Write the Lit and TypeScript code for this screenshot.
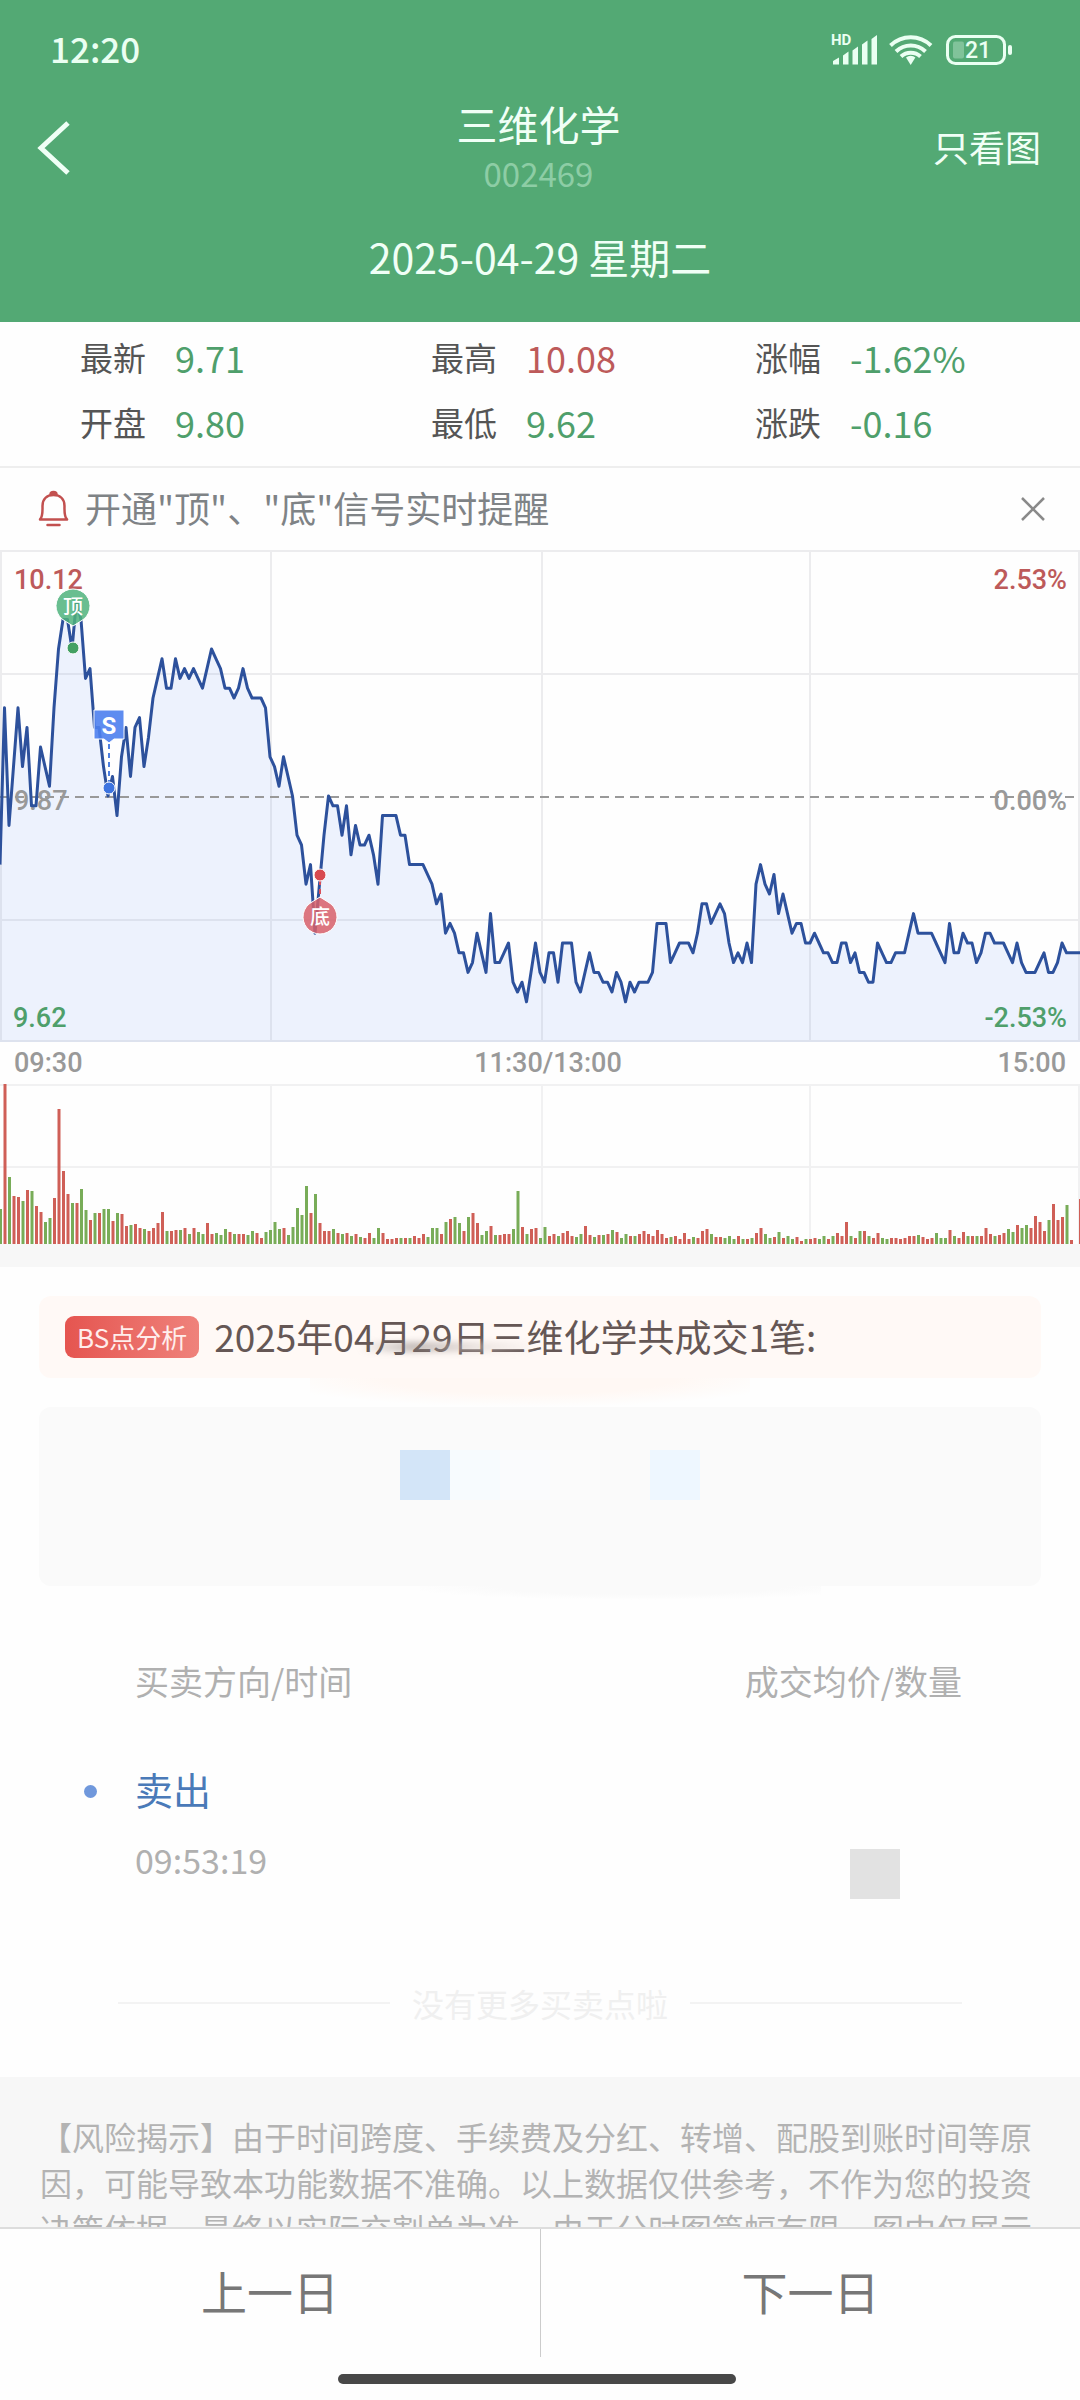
import { LitElement, html, svg, css } from "lit";
import { customElement } from "lit/decorators.js";

const PREV_CLOSE = 9.87;

/* Minute prices, in cents above or below the previous close. */
const PRICE_STEPS = [
  -7, 9, -3, 3, 9, 3, 7, -1, -1, 5, 3, 1, 9, 15, 18, 18, 15, 20, 18, 12,
  13, 7, 7, 3, 0, 2, -2, 4, 7, 2, 7, 8, 3, 6, 10, 12, 14, 11, 11, 14,
  12, 13, 12, 13, 12, 11, 13, 15, 14, 13, 11, 11, 10, 11, 13, 11, 10, 10, 10, 9,
  4, 3, 1, 4, 2, 0, -4, -5, -9, -7, -14, -9, -4, 0, -1, -1, -4, -1, -6, -3,
  -5, -5, -4, -6, -9, -2, -2, -2, -2, -4, -4, -7, -7, -7, -7, -8, -9, -11, -10, -14,
  -13, -14, -16, -16, -18, -17, -14, -16, -18, -12, -17, -17, -16, -15, -19, -20, -19, -21, -18, -15,
  -18, -19, -16, -16, -19, -15, -15, -15, -19, -20, -18, -16, -18, -18, -19, -19, -20, -18, -19, -21,
  -19, -20, -19, -19, -19, -18, -13, -13, -13, -17, -16, -15, -15, -15, -16, -14, -11, -11, -13, -12,
  -11, -12, -15, -17, -16, -17, -15, -17, -9, -7, -9, -10, -8, -12, -10, -12, -14, -13, -13, -15,
  -15, -14, -15, -16, -16, -17, -17, -15, -15, -17, -16, -18, -18, -19, -19, -15, -16, -17, -17, -16,
  -16, -16, -14, -12, -14, -14, -14, -14, -15, -16, -17, -13, -16, -16, -14, -15, -15, -17, -16, -14,
  -14, -15, -15, -15, -16, -17, -15, -17, -18, -18, -18, -17, -16, -18, -18, -17, -15, -16, -16, -16, -16,
];

/* Minute volumes; the letter tells a rising (r) from a falling (g) minute. */
const VOLUMES = (
  "g35 r160 g67 r48 r47 g43 r54 g53 r38 r32 g22 g26 r46 r135 r73 r50 g41 r41 g55 g34 " +
  "r24 g31 r31 g35 g35 r23 g31 r30 r18 g19 r20 r16 g15 r13 r16 r21 r32 g13 r13 r14 " +
  "g14 r16 g10 r16 g12 g10 r21 r10 g11 g9 g15 r12 g10 r10 r10 g9 g13 r11 r6 g12 " +
  "g14 g22 g15 r16 g9 g17 g36 g29 g58 r31 g50 r21 r13 r13 g15 r11 g10 r11 g8 r10 " +
  "g7 r6 r11 g6 g16 r11 r5 r5 r6 g6 r6 g6 r8 r6 r10 g7 g16 g16 r10 g22 " +
  "r25 g27 g21 r13 g27 r31 r21 g9 g13 r18 g9 r9 r10 r10 g15 g53 r17 g10 r15 r16 " +
  "g6 g17 r8 r10 g8 r11 r13 r8 g7 g10 r18 r9 g7 r9 g9 r10 g14 r12 g6 g10 " +
  "r8 g8 r10 r13 r10 r8 r14 r10 r6 g7 r8 r5 r11 r5 g7 r6 r13 r15 g10 r7 " +
  "r7 g6 g8 g5 r8 g5 r5 g6 r11 r16 g10 g6 r7 g12 r6 g8 g5 r7 r3 g5 " +
  "r5 r6 g5 g8 r5 g8 r11 r8 r22 g8 r6 g13 r13 g8 r6 r11 g6 g5 r6 r6 " +
  "r5 r6 r8 r8 g9 r7 r5 r6 g11 g6 g6 r14 g8 r6 r12 g8 r8 g8 r8 r16 " +
  "r10 g8 r9 r11 g15 g12 r19 g16 g19 r16 r28 r22 r13 g24 r40 r24 r27 g39 r4 g0 r45"
)
  .split(" ")
  .map((v) => ({ up: v[0] === "r", size: Number(v.slice(1)) }));

const MINUTE = 4.5;

@customElement("status-bar")
class StatusBar extends LitElement {
  static styles = css`
    :host {
      display: flex;
      align-items: center;
      justify-content: space-between;
      height: 98px;
      padding: 0 65px 0 50px;
      color: #eafff2;
    }
    .clock {
      padding-bottom: 2px;
      font-size: 35px;
      font-weight: 500;
      line-height: 48px;
    }
    .icons {
      display: block;
      width: 184px;
      height: 32px;
      margin-top: 2px;
      overflow: visible;
    }
    .hd {
      font: 700 15px "Roboto", sans-serif;
    }
    .level {
      font: 500 23px "Roboto", sans-serif;
    }
  `;

  render() {
    return html`
      <span class="clock">12:20</span>
      <svg class="icons" viewBox="0 0 184 32" fill="currentColor" aria-hidden="true">
        <text class="hd" x="0" y="11">HD</text>
        <path d="M2 30.500V27L8 23.500V30.500zM12 30.500V21.500L17.500 17.500V30.500zM21.500 30.500V16.500L27 12.500V30.500zM31 30.500V10.500L36.500 6.500V30.500zM40.500 30.500V5L46 1V30.500z" />
        <path d="M75 23.500a7 7 0 0 1 9.400 0L79.700 31z" />
        <g fill="none" stroke="currentColor" stroke-width="4">
          <path d="M59.500 11.500C71 0.500 88.500 0.500 100 11.500" />
          <path d="M65 17.500C73.500 9.500 86 9.500 94.500 17.500" />
          <path d="M70 22.500C75.500 17.500 84 17.500 89.500 22.500" />
        </g>
        <rect x="116.500" y="2.500" width="57" height="27" rx="8" fill="none" stroke="currentColor" stroke-width="3" />
        <rect x="122" y="7.500" width="11" height="17" rx="2" opacity="0.300" />
        <rect x="177" y="11" width="4" height="10" rx="2" />
        <text class="level" x="134" y="24">21</text>
      </svg>
    `;
  }
}

@customElement("price-chart")
class PriceChart extends LitElement {
  static styles = css`
    :host {
      display: block;
    }
    .plot {
      display: block;
      width: 100%;
      height: auto;
    }
    .grid {
      stroke: #ececee;
      stroke-width: 2;
    }
    .base {
      stroke: #999;
      stroke-width: 2;
      stroke-dasharray: 9 6;
    }
    .area {
      fill: #5c8df6;
      fill-opacity: 0.1;
    }
    .line {
      fill: none;
      stroke: #2d519c;
      stroke-width: 3;
      stroke-linejoin: round;
    }
    .label {
      font: 500 27px "Roboto", sans-serif;
    }
    .end {
      text-anchor: end;
    }
    .up {
      fill: #bd5a5a;
    }
    .down {
      fill: #4f9f6b;
    }
    .flat {
      fill: #999;
    }
    .mark {
      fill: #fff;
      font: 500 20px "Noto Sans CJK SC", sans-serif;
      text-anchor: middle;
    }
    .sell {
      font: 700 24px "Roboto", sans-serif;
    }
    .axis {
      display: grid;
      grid-template-columns: 1fr auto 1fr;
      padding: 0 14px;
      color: #999;
      font: 500 27px/42px "Roboto", sans-serif;
    }
    .noon {
      padding-left: 16px;
    }
    .close {
      text-align: right;
    }
  `;

  render() {
    const points = PRICE_STEPS.map((s, i) => `${i * MINUTE},${(246 - s * 9.8).toFixed(1)}`).join(" ");
    return html`
      <svg class="plot" viewBox="0 0 1080 492" role="img" aria-label="分时图">
        <path class="grid" d="M0 1H1080M0 124H1080M0 370H1080M0 491H1080M1 0V492M271 0V492M542 0V492M810 0V492M1079 0V492" />
        <polygon class="area" points="0,492 ${points} 1080,492" />
        <path class="base" d="M0 247H1080" />
        <text class="label flat" x="14" y="260">${PREV_CLOSE}</text>
        <polyline class="line" points=${points} />
        <text class="label up" x="14" y="39">10.12</text>
        <text class="label down" x="13" y="477">9.62</text>
        <text class="label up end" x="1067" y="39">2.53%</text>
        <text class="label flat end" x="1067" y="260">0.00%</text>
        <text class="label down end" x="1067" y="477">-2.53%</text>

        <circle cx="73" cy="98" r="6" fill="#43a063" stroke="#fff" />
        <path d="M73 76l-8-5a17 17 0 1 1 16 0z" fill="#4fb37c" fill-opacity="0.850" stroke="#fff" />
        <text class="mark" x="73" y="64">顶</text>

        <path d="M109 194V238" stroke="#4d7fe0" stroke-width="2" stroke-dasharray="5 4" />
        <circle cx="109" cy="238" r="6" fill="#3d74e0" stroke="#fff" />
        <path d="M94 160h30v29h-10l-5 4l-5-4h-10z" fill="#4d80ee" fill-opacity="0.900" stroke="#fff" />
        <text class="mark sell" x="109" y="184">S</text>

        <path d="M320 330V348" stroke="#d8505a" stroke-width="2" stroke-dasharray="5 4" />
        <circle cx="320" cy="325" r="6" fill="#d84a50" stroke="#fff" />
        <path d="M320 347l8 5a17 17 0 1 1-16 0z" fill="#d8606a" fill-opacity="0.850" stroke="#fff" />
        <text class="mark" x="320" y="374">底</text>
      </svg>
      <div class="axis">
        <span>09:30</span>
        <span class="noon">11:30/13:00</span>
        <span class="close">15:00</span>
      </div>
    `;
  }
}

@customElement("volume-chart")
class VolumeChart extends LitElement {
  static styles = css`
    :host {
      display: block;
    }
    .plot {
      display: block;
      width: 100%;
      height: auto;
    }
    .grid {
      stroke: #f1f1f2;
      stroke-width: 2;
    }
    .rise {
      fill: #cf5f57;
    }
    .fall {
      fill: #78ac58;
    }
  `;

  render() {
    return html`
      <svg class="plot" viewBox="0 0 1080 160" role="img" aria-label="成交量">
        <path class="grid" d="M0 1H1080M0 83H1080M271 0V160M542 0V160M810 0V160M1079 0V160" />
        ${VOLUMES.map(
          (v, i) => svg`<rect class=${v.up ? "rise" : "fall"} x=${i * MINUTE - 1} y=${160 - v.size}
            width="3" height=${v.size} />`
        )}
      </svg>
    `;
  }
}

@customElement("app-root")
class AppRoot extends LitElement {
  static styles = css`
    :host {
      display: flex;
      flex-direction: column;
      height: 100vh;
      background: #fefefe;
      color: #555;
      font-family: "Noto Sans CJK SC", sans-serif;
    }
    button {
      padding: 0;
      border: 0;
      background: none;
      color: inherit;
      font: inherit;
      cursor: pointer;
    }
    .scroll {
      flex: 1;
      min-height: 0;
      overflow-y: auto;
      scrollbar-width: none;
    }
    .header {
      padding-bottom: 36px;
      background: #53a974;
      color: #f0fff6;
      text-align: center;
    }
    .bar {
      display: grid;
      grid-template-columns: 1fr auto 1fr;
      align-items: center;
      padding: 0 39px 0 36px;
    }
    .back {
      justify-self: start;
      display: flex;
    }
    .name {
      margin: 0;
      font-size: 41px;
      font-weight: 400;
      line-height: 50px;
    }
    .code {
      color: #8dcda5;
      font-size: 33px;
      line-height: 50px;
    }
    .only {
      justify-self: end;
      padding-bottom: 4px;
      font-size: 36px;
      line-height: 48px;
    }
    .date {
      margin-top: 28px;
      font-size: 41px;
      line-height: 60px;
    }
    .stats {
      display: grid;
      grid-template-columns: 351px 324px 1fr;
      margin: 0;
      padding: 3px 0 11px 80px;
      border-bottom: 2px solid #eee;
    }
    .stat {
      display: flex;
      align-items: center;
      gap: 29px;
      line-height: 65px;
    }
    .stat dt {
      font-size: 33px;
    }
    .stat dd {
      margin: 0;
      font-size: 36px;
    }
    .down {
      color: #4f9f6b;
    }
    .up {
      color: #bd5a5a;
    }
    .notice {
      display: flex;
      align-items: center;
      height: 82px;
      padding: 0 34px 0 38px;
      color: #7f8386;
      font-size: 36px;
    }
    .bell {
      margin-right: 16px;
    }
    .tip {
      padding-bottom: 4px;
    }
    .dismiss {
      display: flex;
      margin-left: auto;
      color: #8a8a8a;
    }
    .gap {
      height: 23px;
      background: #f7f7f7;
    }
    .analysis {
      display: flex;
      flex-direction: column;
      gap: 29px;
      padding: 29px 39px 0;
    }
    .summary {
      position: relative;
      display: flex;
      align-items: center;
      gap: 15px;
      height: 82px;
      padding: 0 26px;
      border-radius: 12px;
      background: #fff9f6;
      color: #655755;
      font-size: 37px;
    }
    .count {
      padding-bottom: 2px;
    }
    .smear {
      position: absolute;
      left: 320px;
      top: 46px;
      width: 180px;
      height: 10px;
      background: linear-gradient(90deg, transparent, #8a7f7c 30%, #d8cfcb 65%, transparent);
      opacity: 0.5;
      filter: blur(3px);
    }
    .halo {
      position: absolute;
      left: 27%;
      top: 82px;
      width: 44%;
      height: 29px;
      background: radial-gradient(60% 100% at 50% 0, #fff8f4 55%, transparent);
    }
    .badge {
      padding: 0 12px;
      border-radius: 9px;
      background: linear-gradient(90deg, #e55550, #ef827b);
      color: #ffeeec;
      font-size: 26px;
      line-height: 42px;
    }
    .masked {
      position: relative;
      height: 129px;
      padding: 43px 0 7px 361px;
      border-radius: 12px;
      background: #fafafa;
    }
    .shade {
      position: absolute;
      left: 38%;
      top: 179px;
      width: 40%;
      height: 14px;
      background: radial-gradient(60% 100% at 55% 0, #fafafa 60%, transparent);
    }
    .tiles {
      display: flex;
    }
    .tile {
      width: 50px;
      height: 50px;
    }
    .t1 {
      background: #d3e5f8;
    }
    .t2 {
      background: #f7fbfe;
    }
    .t3 {
      background: #fafbfd;
    }
    .t4 {
      background: #fbfbfb;
    }
    .t6 {
      background: #eef7ff;
    }
    .trades {
      width: calc(100% - 253px);
      margin: 68px 118px 0 135px;
      border-collapse: collapse;
      color: #b0b0b0;
      font-size: 34px;
    }
    .trades th,
    .trades td {
      padding: 0;
      font-weight: 400;
      text-align: left;
      vertical-align: top;
    }
    .trades th {
      line-height: 54px;
    }
    .trades .right {
      text-align: right;
    }
    .trades td {
      padding-top: 53px;
    }
    .side {
      position: relative;
      color: #4a7ab8;
      font-size: 38px;
      line-height: 56px;
    }
    .dot {
      position: absolute;
      left: -51px;
      top: 24px;
      width: 13px;
      height: 13px;
      border-radius: 50%;
      background: #7098dc;
    }
    .time {
      padding-top: 19px;
      line-height: 48px;
    }
    .amount {
      display: block;
      width: 50px;
      height: 50px;
      margin: 88px 62px 0 auto;
      background: #e2e2e2;
    }
    .end {
      display: flex;
      align-items: center;
      gap: 22px;
      margin: 80px 118px 50px;
      color: #f0f0f0;
      font-size: 32px;
      line-height: 48px;
    }
    .end::before,
    .end::after {
      content: "";
      flex: 1;
      height: 2px;
      background: #f3f3f3;
    }
    .risk {
      margin: 0;
      padding: 36px 40px 40px;
      background: #f7f7f7;
      color: #b3b3b3;
      font-size: 32px;
      line-height: 46px;
    }
    .days {
      display: grid;
      grid-template-columns: 1fr 1fr;
      border-top: 2px solid #ddd;
      color: #777;
      font-size: 46px;
      line-height: 122px;
    }
    .days button {
      padding-bottom: 6px;
    }
    .days .next {
      border-left: 1px solid #ccc;
    }
    .home {
      display: flex;
      justify-content: center;
      padding: 17px 6px 16px 0;
    }
    .pill {
      width: 37%;
      height: 10px;
      border-radius: 5px;
      background: #484848;
    }
  `;

  private stat(label: string, value: string, tone: string) {
    return html`<div class="stat">
      <dt>${label}</dt>
      <dd class=${tone}>${value}</dd>
    </div>`;
  }

  render() {
    return html`
      <main class="scroll">
        <header class="header">
          <status-bar></status-bar>
          <div class="bar">
            <button class="back" aria-label="返回">
              <svg width="36" height="56" viewBox="0 0 36 56" fill="none" stroke="currentColor" stroke-width="5">
                <path d="M32 3L5 28L32 53" />
              </svg>
            </button>
            <div>
              <h1 class="name">三维化学</h1>
              <div class="code">002469</div>
            </div>
            <button class="only">只看图</button>
          </div>
          <div class="date">2025-04-29 星期二</div>
        </header>

        <dl class="stats">
          ${this.stat("最新", "9.71", "down")} ${this.stat("最高", "10.08", "up")}
          ${this.stat("涨幅", "-1.62%", "down")} ${this.stat("开盘", "9.80", "down")}
          ${this.stat("最低", "9.62", "down")} ${this.stat("涨跌", "-0.16", "down")}
        </dl>

        <div class="notice">
          <svg class="bell" width="31" height="38" viewBox="0 0 31 38" fill="none" stroke="#c2504f" stroke-width="2.500" stroke-linecap="round" stroke-linejoin="round" aria-hidden="true">
            <path d="M2 29.500C5 26.500 4.500 21 4.500 16C4.500 9 9 5 15.500 5S26.500 9 26.500 16C26.500 21 26 26.500 29 29.500z" />
            <path d="M12.500 4.500a3 2.500 0 0 1 6 0z" fill="#c2504f" />
            <path d="M9.500 35H21.500" />
          </svg>
          <span class="tip">开通"顶"、"底"信号实时提醒</span>
          <button class="dismiss" aria-label="关闭">
            <svg width="26" height="26" viewBox="0 0 26 26" fill="none" stroke="currentColor" stroke-width="2.500">
              <path d="M2 2L24 24M24 2L2 24" />
            </svg>
          </button>
        </div>

        <price-chart></price-chart>
        <volume-chart></volume-chart>
        <div class="gap"></div>

        <section class="analysis">
          <div class="summary">
            <span class="badge">BS点分析</span>
            <span class="count">2025年04月29日三维化学共成交1笔:</span>
            <span class="smear"></span>
            <span class="halo"></span>
          </div>
          <div class="masked">
            <div class="tiles">
              <span class="tile t1"></span>
              <span class="tile t2"></span>
              <span class="tile t3"></span>
              <span class="tile t4"></span>
              <span class="tile"></span>
              <span class="tile t6"></span>
            </div>
            <span class="shade"></span>
          </div>
        </section>

        <table class="trades">
          <thead>
            <tr>
              <th scope="col">买卖方向/时间</th>
              <th scope="col" class="right">成交均价/数量</th>
            </tr>
          </thead>
          <tbody>
            <tr>
              <td>
                <div class="side"><span class="dot"></span>卖出</div>
                <div class="time">09:53:19</div>
              </td>
              <td class="right"><span class="amount"></span></td>
            </tr>
          </tbody>
        </table>
        <div class="end">没有更多买卖点啦</div>

        <p class="risk">
          【风险揭示】由于时间跨度、手续费及分红、转增、配股到账时间等原因，可能导致本功能数据不准确。以上数据仅供参考，不作为您的投资决策依据，最终以实际交割单为准。由于分时图篇幅有限，图中仅展示
        </p>
      </main>

      <nav class="days">
        <button>上一日</button>
        <button class="next">下一日</button>
      </nav>
      <div class="home"><span class="pill"></span></div>
    `;
  }
}
